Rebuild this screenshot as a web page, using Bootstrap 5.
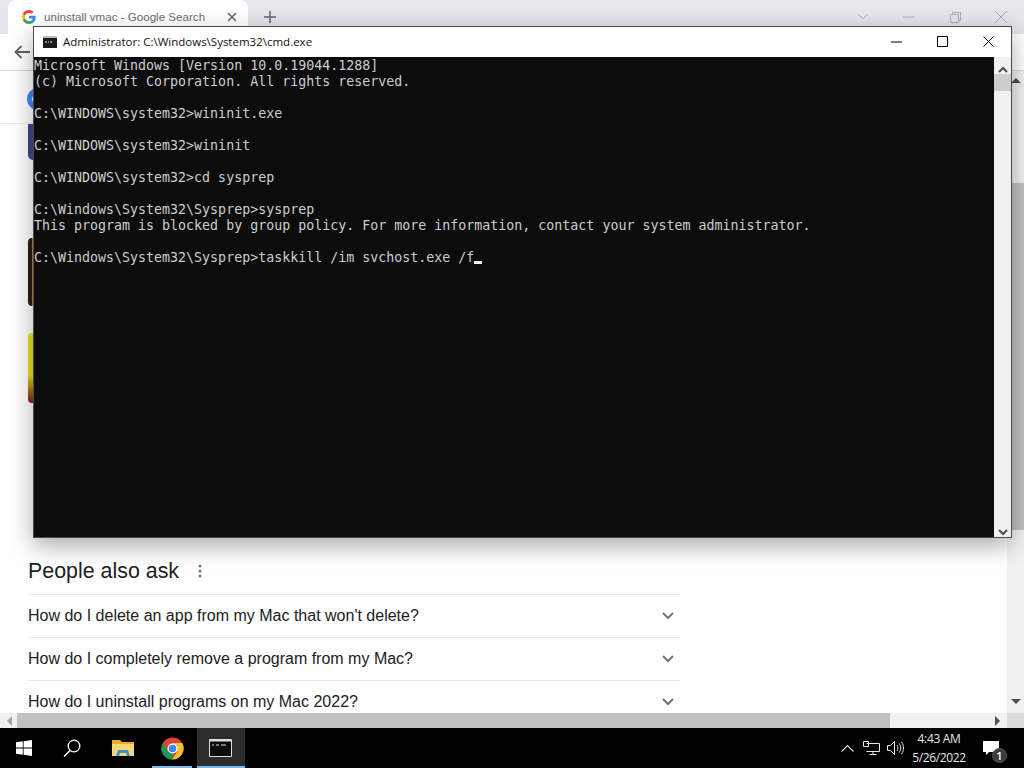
<!DOCTYPE html>
<html lang="en">
<head>
<meta charset="utf-8">
<title>cmd</title>
<link href="https://cdn.jsdelivr.net/npm/bootstrap@5.3.0/dist/css/bootstrap.min.css" rel="stylesheet">
<style>
html,body{margin:0;height:768px;overflow:hidden;background:#fff}
.desk{width:1024px;height:768px;position:relative;overflow:hidden;font-family:"Liberation Sans",Arial,sans-serif}
.browser{height:728px}
.tabstrip{height:34px;background:linear-gradient(#e6e9ec,#e0e3e7);padding-left:8px}
.tabitem{width:240px;height:34px;background:#fff;border-radius:8px 8px 0 0;padding:0 8px 0 14px;color:#6b6f74}
.tabtext{margin-left:8px;width:170px;white-space:nowrap;font-size:11.6px}
.tabclose{margin-left:13px}
.plus{margin-left:16px}
.winctl{margin-left:auto}
.winctl span{width:46px;display:flex;justify-content:center}
.toolbar{height:37px;background:#fff;border-bottom:1px solid #d5d7da;padding-left:14px}
.viewport{height:657px}
.pagearea{width:1007px;height:642px;overflow:hidden}
.searchhead{height:53px;border-bottom:1px solid #e8eaed;padding:17px 0 0 27px}
.gpiece{width:22px;height:22px;border:5px solid #4285f4;border-radius:50%}
.sidethumbs{padding-left:28px;height:409px}
.thumbone{width:12px;height:36px;background:#3d4a86;border-radius:0 0 0 5px}
.thumbtwo{width:12px;height:68px;margin-top:78px;background:linear-gradient(90deg,#2c2112 0 30%,#a88a45 30% 50%,#2c2112 50%);border-radius:4px 0 0 4px}
.thumbthree{width:12px;height:70px;margin-top:27px;background:linear-gradient(#e9e21e 0 60%,#c9a511 72%,#7a1d1d 100%);border-radius:4px 0 0 4px}
.people{width:652px;margin-left:28px;padding-top:22px;color:#202124}
.peoplehead{height:32px;font-size:21.4px;line-height:28px;margin-bottom:7px}
.kebab{margin-left:19px}
.askrow{height:43px;border-top:1px solid #e5e6e8;font-size:16px;padding-right:6px;white-space:nowrap}
.vscroll{width:17px;height:642px;background:#f1f1f1;padding-top:6px}
.vthumb{height:347px;margin-top:100px;background:#c1c1c1}
.hscroll{height:15px;background:#f1f1f1}
.harrow{width:17px;text-align:center}
.hthumb{width:873px;height:15px;background:#c1c1c1}
.hrest{flex:1;padding-right:6px}
.hcorner{width:17px;height:15px;background:#dcdcdc}
.cmdwin{position:absolute;left:33px;top:26px;width:979px;height:512px;background:#fff;border:1px solid #4a4a4a;box-shadow:0 8px 22px rgba(0,0,0,.33)}
.cmdtitle{height:30px;padding:0 0 1px 9px;font-family:"Open Sans",sans-serif;font-size:11.5px;color:#111}
.cmdname{margin-left:6px;white-space:nowrap}
.cmdbtns{margin-left:auto}
.cmdbtns span{width:46px;display:flex;justify-content:center}
.cmdbody{height:480px}
.console{width:961px;height:480px;margin:0;padding-top:1px;background:#0c0c0c;color:#cccccc;font-family:"DejaVu Sans Mono",monospace;font-size:13.3px;line-height:16px;overflow:hidden;white-space:pre}
.caret{display:inline-block;width:8px;height:3px;background:#f2f2f2;vertical-align:-2px}
.cmdscroll{width:17px;height:480px;background:#f0f0f0}
.cmdup{height:17px;text-align:center}
.cmdthumb{height:17px;background:#cdcdcd}
.cmdrest{flex:1}
.taskbar{height:40px;background:#000;color:#fff;font-family:"Open Sans",sans-serif}
.tbslot{width:48px;height:40px;display:flex;align-items:center;justify-content:center}
.folderslot{padding-left:5px}
.tbopen{border-bottom:2px solid #76b9ed;padding-top:2px}
.tbslim{width:40px;margin:0 4px 0 8px}
.tbcmd{background:#2d2d2d;margin-left:1px;padding-right:2px}
.tray{margin-left:auto;padding-right:21px}
.trayitem{width:24px;display:flex;justify-content:center}
.clock{width:64px;text-align:center;font-size:12px;line-height:19px;color:#e8e8e8;white-space:nowrap;letter-spacing:-.35px}
.notif{position:relative;margin-left:8px;width:24px;display:flex;justify-content:center}
.notifbadge{position:absolute;right:-4px;top:7px;width:15px;height:15px;border-radius:50%;background:#3c3c3c;border:1px solid #555;font-size:11px;line-height:13px;text-align:center;color:#fff;font-weight:600}
</style>
</head>
<body>
<div class="desk d-flex flex-column">
  <div class="browser">
    <div class="tabstrip d-flex align-items-center">
      <div class="tabitem d-flex align-items-center">
        <svg width="14" height="14" viewBox="0 0 48 48"><path fill="#EA4335" d="M24 9.500c3.500 0 6.700 1.300 9.100 3.500l6.800-6.800C35.800 2.400 30.200 0 24 0 14.600 0 6.500 5.400 2.600 13.200l7.900 6.200C12.400 13.700 17.700 9.500 24 9.500z"/><path fill="#4285F4" d="M46.900 24.500c0-1.600-.2-3.100-.4-4.500H24v9h12.900c-.6 3-2.200 5.500-4.800 7.200l7.700 6c4.500-4.200 7.100-10.300 7.100-17.700z"/><path fill="#FBBC05" d="M10.500 28.600c-.5-1.400-.8-3-.8-4.600s.3-3.200.8-4.600l-7.900-6.200C.9 16.500 0 20.100 0 24s.9 7.500 2.600 10.800l7.900-6.200z"/><path fill="#34A853" d="M24 48c6.500 0 11.900-2.100 15.900-5.800l-7.700-6c-2.200 1.400-4.900 2.300-8.200 2.300-6.300 0-11.600-4.200-13.500-9.900l-7.900 6.200C6.500 42.600 14.600 48 24 48z"/></svg>
        <span class="tabtext">uninstall vmac - Google Search</span>
        <svg class="tabclose flex-shrink-0" width="10" height="10" viewBox="0 0 10 10"><path d="M1 1l8 8M9 1l-8 8" stroke="#5f6368" stroke-width="1.500"/></svg>
      </div>
      <svg class="plus" width="12" height="12" viewBox="0 0 12 12"><path d="M6 0v12M0 6h12" stroke="#5f6368" stroke-width="1.500"/></svg>
      <div class="winctl d-flex align-items-center">
        <span><svg width="12" height="8" viewBox="0 0 12 8"><path d="M1 1l5 5 5-5" fill="none" stroke="#a9acb0"/></svg></span>
        <span><svg width="12" height="2" viewBox="0 0 12 2"><path d="M0 1h12" stroke="#a9acb0"/></svg></span>
        <span><svg width="11" height="11" viewBox="0 0 11 11"><path d="M.5 2.500h8v8h-8zM2.500 2.500v-2h8v8h-2" fill="none" stroke="#a9acb0"/></svg></span>
        <span><svg width="12" height="12" viewBox="0 0 12 12"><path d="M0 0l12 12M12 0L0 12" stroke="#a9acb0"/></svg></span>
      </div>
    </div>
    <div class="toolbar d-flex align-items-center">
      <svg width="16" height="14" viewBox="0 0 16 14"><path d="M16 7H2M7.500 1L1.500 7l6 6" fill="none" stroke="#5f6368" stroke-width="1.800"/></svg>
    </div>
    <div class="viewport">
      <div class="d-flex">
        <div class="pagearea">
          <div class="searchhead"><div class="gpiece"></div></div>
          <div class="sidethumbs">
            <div class="thumbone"></div>
            <div class="thumbtwo"></div>
            <div class="thumbthree"></div>
          </div>
          <div class="people">
            <div class="peoplehead d-flex align-items-center">People also ask
              <svg class="kebab" width="4" height="14" viewBox="0 0 4 14"><g fill="#70757a"><circle cx="2" cy="2" r="1.500"/><circle cx="2" cy="7" r="1.500"/><circle cx="2" cy="12" r="1.500"/></g></svg>
            </div>
            <div class="askrow d-flex align-items-center justify-content-between">How do I delete an app from my Mac that won't delete?
              <svg width="12" height="8" viewBox="0 0 12 8"><path d="M1 1l5 5 5-5" fill="none" stroke="#70757a" stroke-width="2"/></svg></div>
            <div class="askrow d-flex align-items-center justify-content-between">How do I completely remove a program from my Mac?
              <svg width="12" height="8" viewBox="0 0 12 8"><path d="M1 1l5 5 5-5" fill="none" stroke="#70757a" stroke-width="2"/></svg></div>
            <div class="askrow d-flex align-items-center justify-content-between">How do I uninstall programs on my Mac 2022?
              <svg width="12" height="8" viewBox="0 0 12 8"><path d="M1 1l5 5 5-5" fill="none" stroke="#70757a" stroke-width="2"/></svg></div>
          </div>
        </div>
        <div class="vscroll d-flex flex-column">
          <svg class="align-self-center" width="10" height="6" viewBox="0 0 10 6"><path d="M0 6l5-5 5 5z" fill="#505050"/></svg>
          <div class="vthumb"></div>
          <svg class="align-self-center mt-auto mb-2" width="10" height="6" viewBox="0 0 10 6"><path d="M0 0l5 5 5-5z" fill="#505050"/></svg>
        </div>
      </div>
      <div class="hscroll d-flex align-items-center">
        <div class="harrow"><svg width="6" height="10" viewBox="0 0 6 10"><path d="M6 0L1 5l5 5z" fill="#a3a3a3"/></svg></div>
        <div class="hthumb"></div>
        <div class="hrest d-flex justify-content-end"><svg width="6" height="10" viewBox="0 0 6 10"><path d="M0 0l5 5-5 5z" fill="#505050"/></svg></div>
        <div class="hcorner"></div>
      </div>
    </div>
  </div>

  <div class="taskbar d-flex align-items-center">
    <div class="tbslot">
      <svg width="16" height="16" viewBox="0 0 16 16"><path fill="#fff" d="M0 2.300l6.800-1V7.600H0zM7.600 1.200L16 0v7.600H7.600zM0 8.400h6.800v6.400l-6.800-1zM7.600 8.400H16V16l-8.400-1.200z"/></svg>
    </div>
    <div class="tbslot">
      <svg width="18" height="18" viewBox="0 0 18 18"><circle cx="11" cy="7" r="5.800" fill="none" stroke="#fff" stroke-width="1.300"/><path d="M7 11.500L1 17.500" stroke="#fff" stroke-width="1.500"/></svg>
    </div>
    <div class="tbslot folderslot">
      <svg width="22" height="18" viewBox="0 0 22 18"><path fill="#e8a92f" d="M0 1h8l2 2h12v14H0z"/><path fill="#f8d775" d="M0 5h22v12H0z"/><path fill="#3f8fcf" d="M6 11h10l2 6h-3l-1-3H8l-1 3H4z"/></svg>
    </div>
    <div class="tbslot tbopen tbslim">
      <svg width="23" height="23" viewBox="0 0 48 48"><circle cx="24" cy="24" r="23" fill="#db4437"/><path fill="#0f9d58" d="M24 47A23 23 0 0 1 4 12.500L14 30l10 6 3 1z"/><path fill="#fbc02d" d="M24 47a23 23 0 0 0 20-34.500H24l10 18z"/><circle cx="24" cy="24" r="10.500" fill="#fff"/><circle cx="24" cy="24" r="8" fill="#4285f4"/></svg>
    </div>
    <div class="tbslot tbopen tbcmd">
      <svg width="23" height="18" viewBox="0 0 23 18"><path fill="#0c0c0c" stroke="#ddd" d="M.5.500h22v17H.5z"/><path fill="#ddd" d="M1 1h21v1.500H1z"/><path stroke="#ddd" d="M3 6h2M7 6h3M12 6h5"/></svg>
    </div>
    <div class="tray d-flex align-items-center">
      <span class="trayitem"><svg width="13" height="8" viewBox="0 0 13 8"><path d="M.5 7.500l6-6 6 6" fill="none" stroke="#ddd" stroke-width="1.200"/></svg></span>
      <span class="trayitem"><svg width="17" height="14" viewBox="0 0 17 14"><path d="M3.500 2.500h13v8h-13M10 10.500v3M6.500 13.500h7M.5.500h5v5h-5z" fill="none" stroke="#e8e8e8"/></svg></span>
      <span class="trayitem"><svg width="17" height="14" viewBox="0 0 17 14"><path d="M.5 4.500h3l4-4v13l-4-4h-3zM10 4c1.300 2 1.300 4 0 6M12.300 2.500c2 3 2 6 0 9M14.500 1c2.700 4 2.700 8 0 12" fill="none" stroke="#e8e8e8"/></svg></span>
      <div class="clock">4:43 AM<br>5/26/2022</div>
      <div class="notif">
        <svg width="16" height="14" viewBox="0 0 16 14"><path fill="#fff" d="M0 0h16v11H6l-3 3v-3H0z"/></svg>
        <span class="notifbadge">1</span>
      </div>
    </div>
  </div>

  <div class="cmdwin">
    <div class="cmdtitle d-flex align-items-center">
      <svg width="14" height="12" viewBox="0 0 14 12"><path fill="#1b1b1b" d="M0 0h14v12H0z"/><path fill="#bbb" d="M0 0h14v2H0z"/><path stroke="#eee" d="M2 6h2M5 6h1M7 6h2"/></svg>
      <span class="cmdname">Administrator: C:\Windows\System32\cmd.exe</span>
      <div class="cmdbtns d-flex align-items-center">
        <span><svg width="11" height="2" viewBox="0 0 11 2"><path d="M0 1h11" stroke="#000"/></svg></span>
        <span><svg width="11" height="11" viewBox="0 0 11 11"><path d="M.5.500h10v10H.5z" fill="none" stroke="#000"/></svg></span>
        <span><svg width="11" height="11" viewBox="0 0 11 11"><path d="M.5.500l10 10M10.500.500l-10 10" stroke="#000"/></svg></span>
      </div>
    </div>
    <div class="cmdbody d-flex">
      <pre class="console">Microsoft Windows [Version 10.0.19044.1288]
(c) Microsoft Corporation. All rights reserved.

C:\WINDOWS\system32&gt;wininit.exe

C:\WINDOWS\system32&gt;wininit

C:\WINDOWS\system32&gt;cd sysprep

C:\Windows\System32\Sysprep&gt;sysprep
This program is blocked by group policy. For more information, contact your system administrator.

C:\Windows\System32\Sysprep&gt;taskkill /im svchost.exe /f<span class="caret"></span></pre>
      <div class="cmdscroll d-flex flex-column">
        <div class="cmdup"><svg width="10" height="7" viewBox="0 0 10 7"><path d="M1 6l4-4 4 4" fill="none" stroke="#505050" stroke-width="2"/></svg></div>
        <div class="cmdthumb"></div>
        <div class="cmdrest"></div>
        <div class="cmdup"><svg width="10" height="7" viewBox="0 0 10 7"><path d="M1 1l4 4 4-4" fill="none" stroke="#505050" stroke-width="2"/></svg></div>
      </div>
    </div>
  </div>
</div>
<script src="https://cdn.jsdelivr.net/npm/bootstrap@5.3.0/dist/js/bootstrap.bundle.min.js"></script>
</body>
</html>
